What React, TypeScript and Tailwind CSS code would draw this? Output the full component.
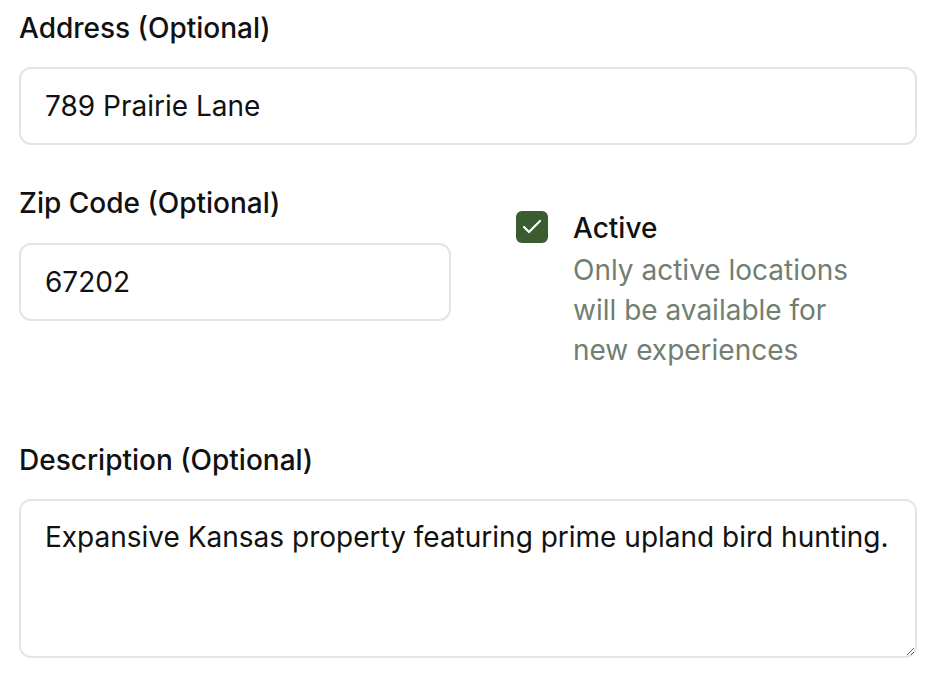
import React, { useState } from 'react';

const font = { fontFamily: 'Inter, "Noto Sans", sans-serif' };

export default function App() {
  const [address, setAddress] = useState('789 Prairie Lane');
  const [zip, setZip] = useState('67202');
  const [active, setActive] = useState(true);
  const [desc, setDesc] = useState('Expansive Kansas property featuring prime upland bird hunting.');

  return (
    <div className="min-h-screen bg-white pl-[19px] pr-[27px] pt-[12px] text-[#111111]" style={font}>
      {/* Address */}
      <label className="block text-[28px] font-medium leading-[32px]">Address (Optional)</label>
      <input
        className="mt-[23px] block h-[78px] w-full rounded-[12px] border-2 border-[#e4e4e4] px-[24px] text-[28px] outline-none"
        value={address}
        onChange={e => setAddress(e.target.value)}
      />

      {/* Zip + Active */}
      <div className="mt-[42px] grid grid-cols-2 gap-[34px]">
        <div>
          <label className="block text-[28px] font-medium leading-[32px]">Zip Code (Optional)</label>
          <input
            className="mt-[24px] block h-[78px] w-full rounded-[12px] border-2 border-[#e4e4e4] px-[24px] text-[28px] outline-none"
            value={zip}
            onChange={e => setZip(e.target.value)}
          />
        </div>
        <div className="flex gap-[25px] pl-[31px] pt-[24px]">
          <button
            onClick={() => setActive(a => !a)}
            className={`flex h-[32px] w-[32px] shrink-0 items-center justify-center rounded-[6px] ${active ? 'bg-[#3b5c30]' : 'border-2 border-[#c9c9c9] bg-white'}`}
          >
            {active && (
              <svg width="24" height="24" viewBox="0 0 24 24" fill="none" stroke="white" strokeWidth="2.2" strokeLinecap="round" strokeLinejoin="round">
                <path d="M20 6 9 17l-5-5" />
              </svg>
            )}
          </button>
          <div>
            <div className="text-[28px] font-medium leading-[34px]">Active</div>
            <p className="mt-[5px] w-[300px] text-[28px] leading-[40px] text-[#727e70]">
              Only active locations will be available for new experiences
            </p>
          </div>
        </div>
      </div>

      {/* Description */}
      <label className="mt-[74px] block text-[28px] font-medium leading-[32px]">Description (Optional)</label>
      <textarea
        className="mt-[23px] block h-[159px] w-full rounded-[12px] border-2 border-[#e4e4e4] px-[24px] pb-[20px] pt-[18px] text-[28px] leading-[36px] outline-none"
        value={desc}
        onChange={e => setDesc(e.target.value)}
      />
    </div>
  );
}
